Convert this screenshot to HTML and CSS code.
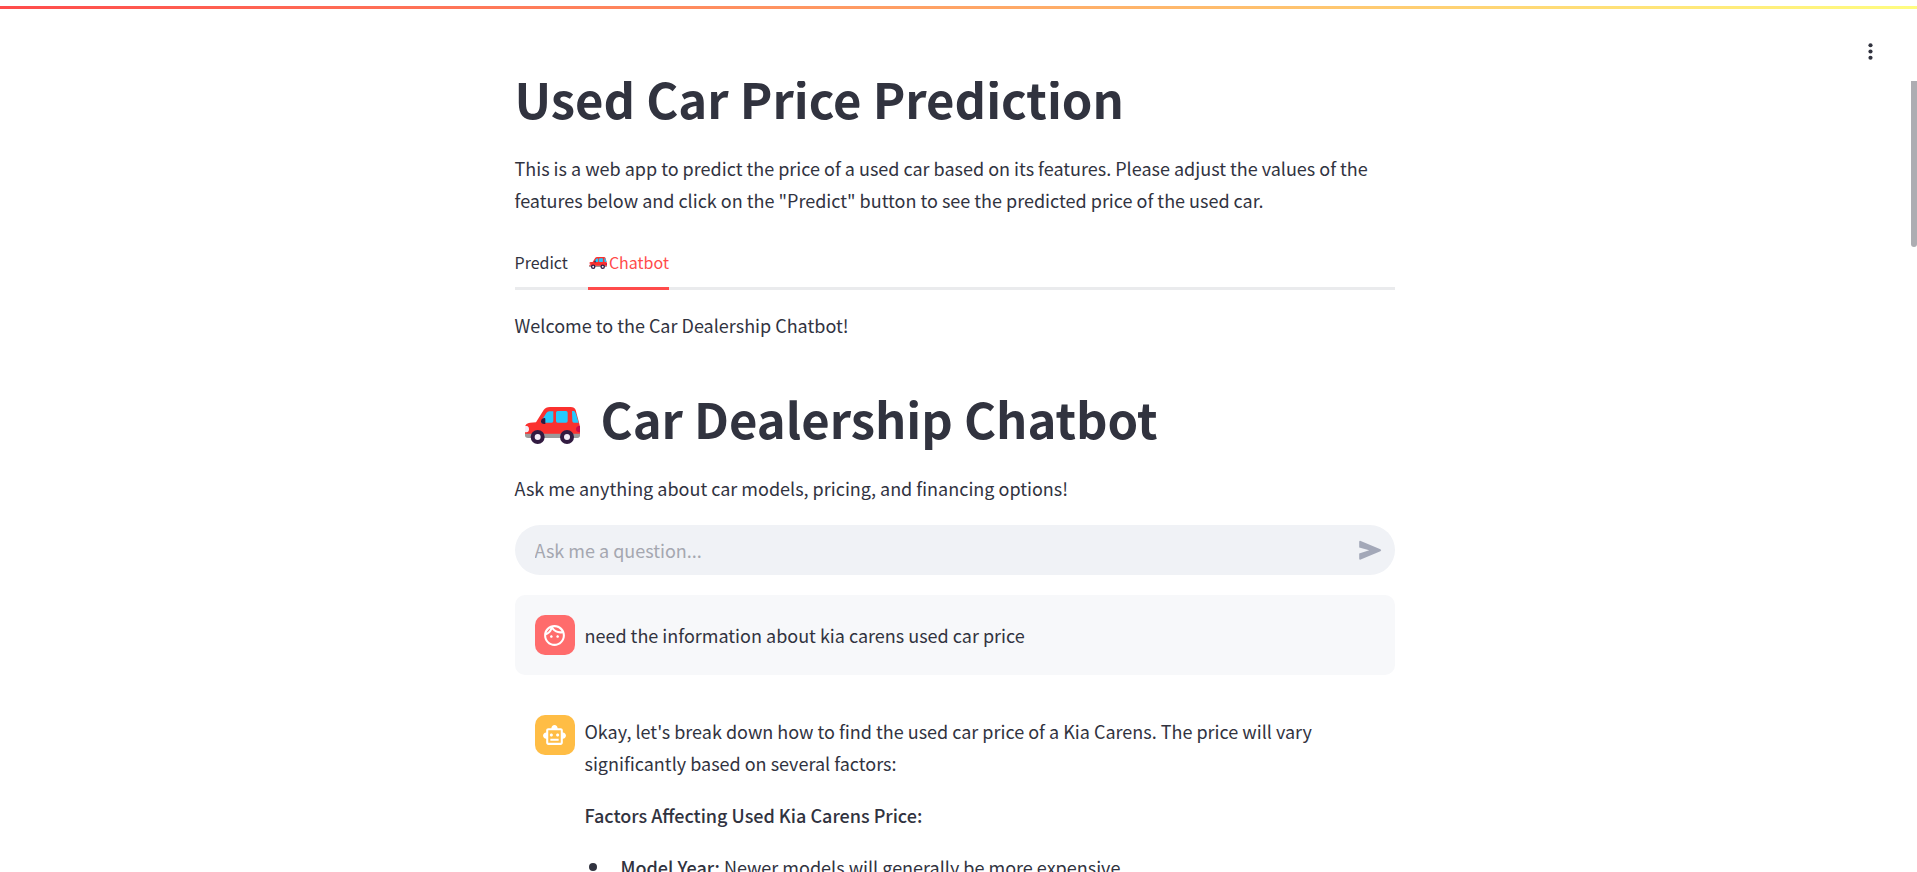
FILE: index.html
```html
<!DOCTYPE html>
<html lang="en">
<head>
<meta charset="utf-8">
<title>Used Car Price Prediction</title>
<link rel="stylesheet" href="styles.css">
</head>
<body>
<svg class="symbols" aria-hidden="true">
  <symbol id="car" viewBox="0 0 165 111">
    <path fill="#9b9b9b" d="M0 76H165V85Q165 93 157 93H9Q0 93 0 85Z"/>
    <path fill="#fb312f" d="M0 80V60Q2 48 15 47L33 46 56 9Q62 0 75 0H137Q149 0 152 9L163 50Q165 56 165 80Z"/>
    <path fill="#26c9fc" d="M47 45 64 18Q67 13 73 13H85V42Q85 47 80 47H50ZM98 12H123Q128 12 128 17V42Q128 47 123 47H98Q93 47 93 42V17Q93 12 98 12ZM141 12H148Q152 16 154 24L161 47H147Q142 47 142 42Z"/>
    <path fill="#321b41" d="M58 33Q61 32 61 36V51Q55 52 50 49Q46 44 49 38Q52 33 58 33Z"/>
    <path fill="#f4eef8" d="M0 57H5Q12 58 12 67Q12 76 4 76H0Z"/>
    <path fill="#ca0b4a" d="M165 56Q153 57 153 66Q153 76 165 76Z"/>
    <circle cx="38" cy="90" r="21" fill="#321b41"/><circle cx="38" cy="90" r="9" fill="#f4eef8"/>
    <circle cx="126" cy="90" r="21" fill="#321b41"/><circle cx="126" cy="90" r="9" fill="#f4eef8"/>
  </symbol>
</svg>
<header class="toolbar">
  <div class="decoration"></div>
  <button class="menu" type="button" aria-label="Main menu">
    <svg class="icon" viewBox="0 0 24 24"><circle cx="12" cy="6" r="2"/><circle cx="12" cy="12" r="2"/><circle cx="12" cy="18" r="2"/></svg>
  </button>
</header>
<div class="viewport">
  <main class="content">
    <h1 class="title">Used Car Price Prediction</h1>
    <p class="text">This is a web app to predict the price of a used car based on its features. Please adjust the values of the features below and click on the "Predict" button to see the predicted price of the used car.</p>
    <div class="tabs" role="tablist">
      <button class="tab" type="button" role="tab" aria-selected="false">Predict</button>
      <button class="tab tab-active" type="button" role="tab" aria-selected="true"><svg class="car-small" aria-hidden="true"><use href="#car"/></svg>Chatbot</button>
    </div>
    <p class="text">Welcome to the Car Dealership Chatbot!</p>
    <h1 class="title title-chat"><svg class="car-large" aria-hidden="true"><use href="#car"/></svg>Car Dealership Chatbot</h1>
    <p class="text">Ask me anything about car models, pricing, and financing options!</p>
    <form class="ask">
      <input class="ask-input" type="text" placeholder="Ask me a question..." aria-label="Ask me a question...">
      <button class="send" type="button" aria-label="Send">
        <svg class="icon" viewBox="0 0 25 25"><path d="M2.2 3.9Q2.2 2.4 3.7 2.9L23.4 11.2Q25 12.2 23.4 13.2L3.7 21.6Q2.2 22 2.2 20.5V15.4L12.2 12.2 2.2 9.4Z"/></svg>
      </button>
    </form>
    <section class="message message-user">
      <span class="avatar avatar-user"><svg class="icon" viewBox="0 0 24 24"><path d="M10.25 13c0 .69-.56 1.25-1.25 1.25S7.75 13.69 7.75 13s.56-1.25 1.25-1.25 1.25.56 1.25 1.25zM15 11.75c-.69 0-1.25.56-1.25 1.25s.56 1.25 1.25 1.25 1.25-.56 1.25-1.25-.56-1.25-1.25-1.25zm7 .25c0 5.52-4.48 10-10 10S2 17.52 2 12 6.48 2 12 2s10 4.48 10 10zM10.66 4.12C12.06 6.44 14.6 8 17.5 8c.46 0 .91-.05 1.34-.12C17.44 5.56 14.9 4 12 4c-.46 0-.91.05-1.34.12zM4.42 9.47c1.71-.97 3.03-2.55 3.66-4.44C6.37 6 5.05 7.58 4.42 9.47zM20 12c0-.78-.12-1.53-.33-2.24-.7.15-1.42.24-2.17.24-3.13 0-5.92-1.44-7.76-3.69C8.69 8.87 6.6 10.88 4 11.86c.01.04 0 .09 0 .14 0 4.41 3.59 8 8 8s8-3.59 8-8z"/></svg></span>
      <p class="text">need the information about kia carens used car price</p>
    </section>
    <section class="message">
      <span class="avatar avatar-bot"><svg class="icon" viewBox="0 0 24 24"><path d="M20 9V7c0-1.1-.9-2-2-2h-3c0-1.66-1.34-3-3-3S9 3.34 9 5H6c-1.1 0-2 .9-2 2v2c-1.66 0-3 1.34-3 3s1.34 3 3 3v4c0 1.1.9 2 2 2h12c1.1 0 2-.9 2-2v-4c1.66 0 3-1.34 3-3s-1.34-3-3-3zm-2 10H6V7h12v12zm-9-6c-.83 0-1.5-.67-1.5-1.5S8.17 10 9 10s1.5.67 1.5 1.5S9.83 13 9 13zm7.5-1.5c0 .83-.67 1.5-1.5 1.5s-1.5-.67-1.5-1.5.67-1.5 1.5-1.5 1.5.67 1.5 1.5zM8 15h8v2H8v-2z"/></svg></span>
      <div class="reply">
        <p class="text">Okay, let's break down how to find the used car price of a Kia Carens. The price will vary significantly based on several factors:</p>
        <p class="text"><strong>Factors Affecting Used Kia Carens Price:</strong></p>
        <ul class="factors">
          <li class="factor"><span><strong>Model Year:</strong> Newer models will generally be more expensive.</span></li>
        </ul>
      </div>
    </section>
  </main>
  <div class="scroll-thumb"></div>
</div>
</body>
</html>
```
FILE: styles.css
```css
* { box-sizing: border-box; }

body {
  margin: 0;
  height: 100vh;
  display: flex;
  flex-direction: column;
  overflow: hidden;
  background: #fff;
  color: #31333f;
  font-family: "Noto Sans CJK SC", "Noto Sans", sans-serif;
  font-size: 18px;
  line-height: 32px;
}

button, input {
  font: inherit;
  color: inherit;
  border: 0;
  padding: 0;
  background: none;
}

strong { font-weight: 500; }

.symbols { position: absolute; width: 0; height: 0; }

.icon { display: block; width: 25px; height: 25px; fill: currentColor; }

.toolbar {
  flex: none;
  height: 81px;
  padding-top: 6px;
}

.decoration {
  height: 3px;
  background: linear-gradient(90deg, #ff4b4b, #fffd80);
}

.menu { display: block; margin: 30px 34px 0 auto; }

.viewport {
  position: relative;
  flex: 1;
  min-height: 0;
  overflow: hidden;
  padding-right: 8px;
}

.scroll-thumb {
  position: absolute;
  top: 0;
  right: 0;
  width: 6px;
  height: 166px;
  border-radius: 0 0 4px 4px;
  background: #adadb2;
}

.content {
  max-width: 880px;
  margin: -16px auto 0;
}

.title {
  margin: 0 0 21px;
  font-size: 49px;
  line-height: 66px;
  font-weight: 700;
}

.title-chat { display: flex; align-items: center; margin: 44px 0 21px; }

.text { margin: 0; }

.tabs {
  display: flex;
  gap: 20px;
  margin: 20px 0 19px;
  box-shadow: inset 0 -3px #eaebed;
}

.tab {
  display: flex;
  align-items: center;
  height: 54px;
  font-size: 16px;
  border-bottom: 3px solid transparent;
}

.tab-active { color: #ff4b4b; border-color: #ff4b4b; }

.car-small { width: 18px; height: 12px; margin: 2px 2px 0 1px; }

.car-large { width: 55px; height: 37px; margin: 14px 21px 0 10px; }

.ask {
  display: flex;
  align-items: center;
  height: 50px;
  margin: 21px 0 20px;
  padding: 0 13px 0 20px;
  border-radius: 25px;
  background: #f0f2f6;
}

.ask-input { flex: 1; min-width: 0; outline: 0; }

.ask-input::placeholder { color: #a5a7b0; opacity: 1; }

.send { color: #a3a8b8; }

.message {
  display: flex;
  align-items: flex-start;
  gap: 10px;
  padding: 20px;
  border-radius: 10px;
}

.message-user {
  align-items: center;
  margin-bottom: 20px;
  background: #f7f8fa;
}

.avatar {
  flex: none;
  display: grid;
  place-items: center;
  width: 40px;
  height: 40px;
  border-radius: 10px;
  color: #fff;
}

.avatar-user { background: #ff6c6c; }

.avatar-bot { background: #ffbd45; }

.reply { display: grid; gap: 20px; }

.factors { margin: 0; padding: 0 0 0 4px; list-style: none; }

.factor { display: flex; gap: 24px; }

.factor::before {
  content: "";
  flex: none;
  width: 8px;
  height: 8px;
  margin-top: 12px;
  border-radius: 50%;
  background: currentColor;
}
```
